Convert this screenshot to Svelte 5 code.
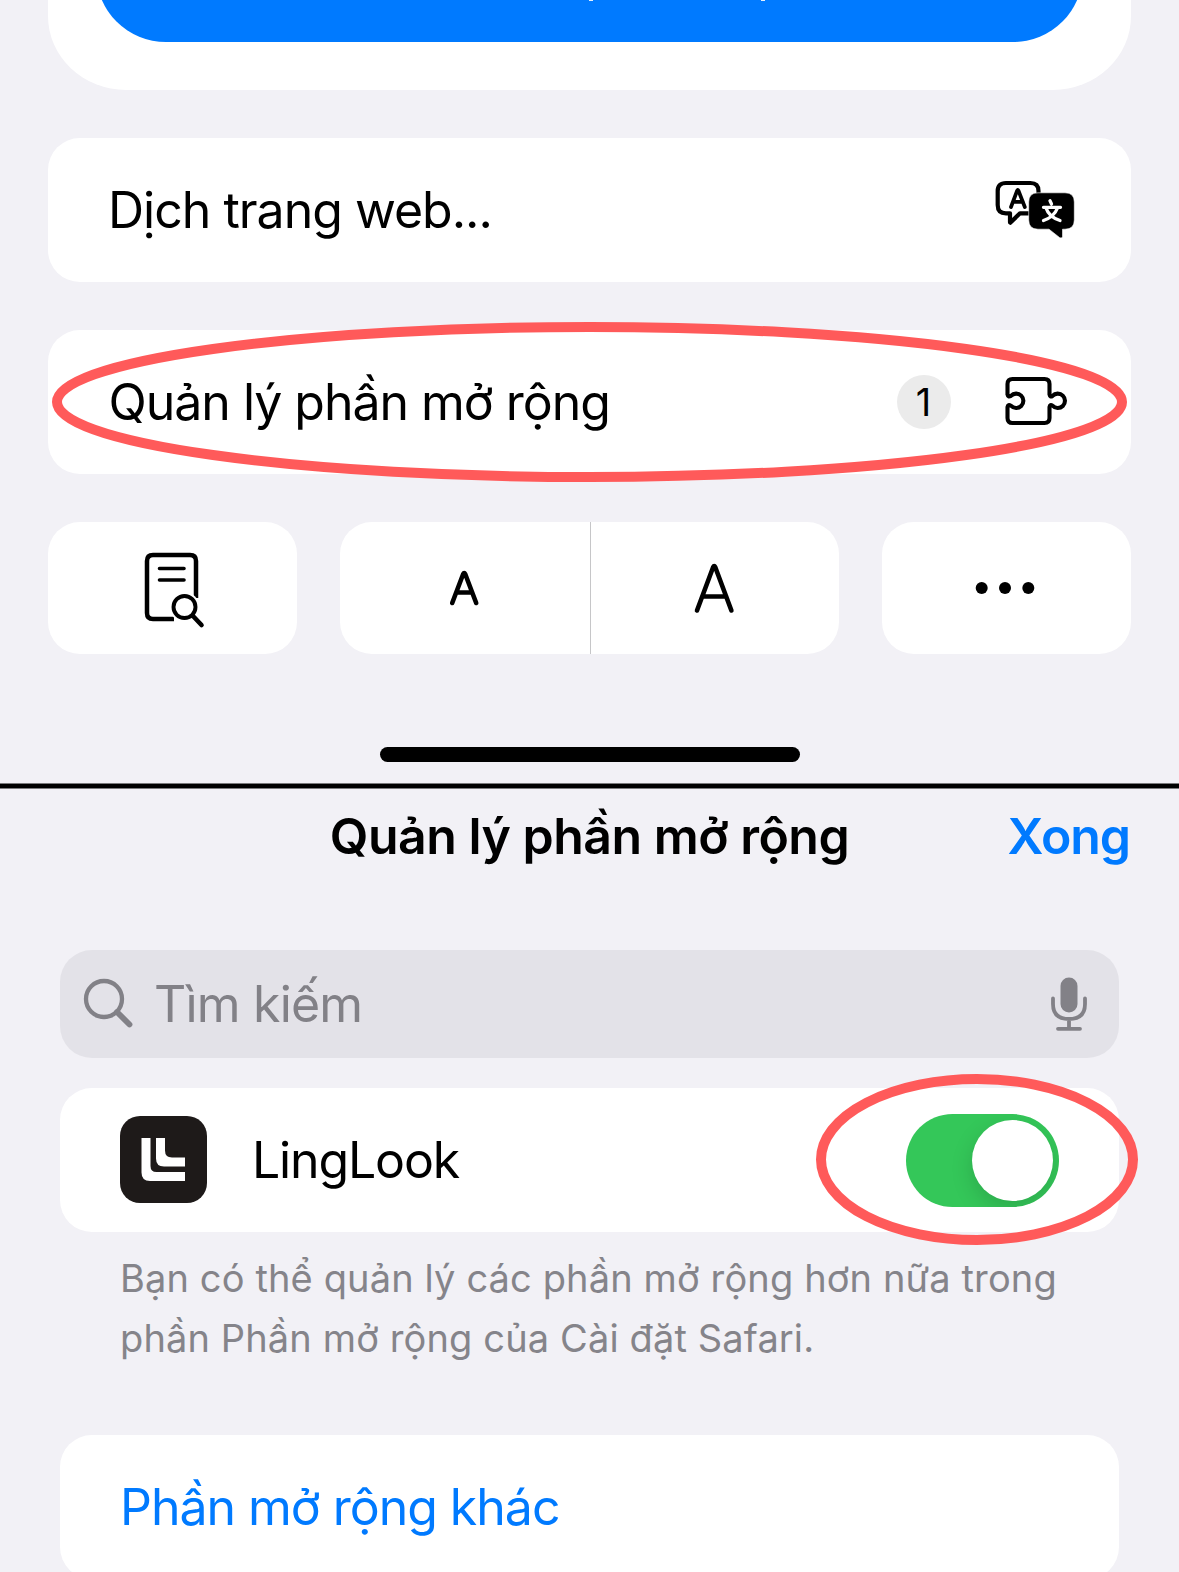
<script>
  const title = 'Quản lý phần mở rộng';
</script>

<main>
  <section class="sheet">
    <div class="hero"><div class="cta"><i></i><i></i></div></div>

    <div class="row">
      <span class="t t1">Dịch trang web...</span>
      <svg class="translate" width="80" height="60" viewBox="0 0 80 60">
        <path d="M11 3H35.500Q43.500 3 43.500 11V33.300H25L15.500 42.500Q15 43 15 42V33.300H11Q2.700 33.300 2.700 25V11Q2.700 3 11 3Z" fill="none" stroke="#000" stroke-width="4.200" stroke-linejoin="round" />
        <path d="M16 27L22.200 10.500Q22.800 9.300 23.400 10.500L29.800 27M18 21.800H28" fill="none" stroke="#000" stroke-width="3.700" stroke-linecap="round" stroke-linejoin="round" />
        <path d="M43 12.800H70Q79.300 12.800 79.300 22V40Q79.300 49.200 70 49.200H67.500V56.500Q67 59 64.500 57.500L54 49.200H43Q33.700 49.200 33.700 40V22Q33.700 12.800 43 12.800Z" stroke="#fff" stroke-width="0.600" />
        <path d="M55 20.800L56.500 24M48.500 27.300H65.500M51 28Q54 37 65 40.500M62.500 28Q59 37 48.500 40.500" fill="none" stroke="#fff" stroke-width="3.300" stroke-linecap="round" />
      </svg>
    </div>

    <div class="row manage">
      <span class="t t2">{title}</span>
      <b class="badge">1</b>
      <svg class="puzzle" width="64" height="52" viewBox="0 0 64 52">
        <path d="M3.500 19V8Q3.500 3 8.500 3H40.500Q45.500 3 45.500 8V18.500Q46 21.500 48.500 19.900A7.200 7.200 0 1 1 48.500 29.700Q46 28 45.500 31V42Q45.500 47 40.500 47H8.500Q3.500 47 3.500 42V31Q4 28 6.900 29.700A7.200 7.200 0 1 0 6.900 19.900Q4 21.500 3.500 18.500" fill="none" stroke="#000" stroke-width="4.100" stroke-linejoin="round" />
      </svg>
      <svg class="ring ring-wide" width="1075" height="160" viewBox="0 0 1075 160"><ellipse cx="537.500" cy="80" rx="532.500" ry="75" /></svg>
    </div>

    <div class="tools">
      <div class="tile">
        <svg class="find" width="62" height="76" viewBox="0 0 62 76">
          <path d="M31 69H10Q4 69 4 63V11Q4 5 10 5H47Q53 5 53 11V48" fill="none" stroke="#000" stroke-width="4.500" />
          <path d="M16.500 18.500H41M16.500 30H41" stroke="#000" stroke-width="3.600" stroke-linecap="round" />
          <circle cx="41.500" cy="57" r="15" fill="#fff" />
          <circle cx="41.500" cy="57" r="11" fill="#fff" stroke="#000" stroke-width="3.900" />
          <path d="M50 66L58.500 75" stroke="#000" stroke-width="4.600" stroke-linecap="round" />
        </svg>
      </div>
      <div class="tile pair">
        <div class="half">
          <svg width="30" height="36" viewBox="0 0 30 36"><path d="M2.200 33L13.200 4Q14.200 2 15.200 4L26.200 33M6.500 22.500H22" /></svg>
        </div>
        <div class="half">
          <svg width="42" height="52" viewBox="0 0 42 52"><path d="M3 48.500L19.200 5Q20.200 3 21.200 5L37.400 48.500M9 34.500H31.500" /></svg>
        </div>
      </div>
      <div class="tile">
        <svg class="dots" width="60" height="14" viewBox="0 0 60 14"><circle cx="6.700" cy="7" r="6" /><circle cx="30" cy="7" r="6" /><circle cx="53.300" cy="7" r="6" /></svg>
      </div>
    </div>

    <div class="home"></div>
  </section>

  <div class="divider"></div>

  <section class="panel">
    <header>
      <h1>{title}</h1>
      <a class="done">Xong</a>
    </header>

    <div class="search">
      <svg width="52" height="52" viewBox="0 0 52 52">
        <circle cx="21" cy="21" r="18" fill="none" stroke="#828187" stroke-width="4.300" />
        <path d="M34 34L46.500 46.500" stroke="#828187" stroke-width="5.800" stroke-linecap="round" />
      </svg>
      <span class="t t3">Tìm kiếm</span>
      <svg class="mic" width="36" height="54" viewBox="0 0 36 54" fill="none" stroke="#828187" stroke-width="3.800" stroke-linecap="round">
        <rect x="9.500" y="0.500" width="17" height="35" rx="8.500" fill="#828187" stroke="none" />
        <path d="M2 21.500V27Q2 42 18 42Q34 42 34 27V21.500M18 42V51M7 51.800H29" />
      </svg>
    </div>

    <div class="ext">
      <svg class="logo" width="87" height="87" viewBox="0 0 87 87">
        <rect width="87" height="87" rx="20" fill="#1e1a19" />
        <path d="M21.500 22H30.500V50Q30.500 56 36.500 56H65V65H30Q21.500 65 21.500 56.500Z" fill="#fff" />
        <path d="M36 22H45V34.500Q45 41.500 52 41.500H65V50.500H44Q36 50.500 36 42.500Z" fill="#fff" />
      </svg>
      <span class="t t4">LingLook</span>
      <div class="switch"><div class="knob"></div></div>
      <svg class="ring ring-switch" width="322" height="171" viewBox="0 0 322 171"><ellipse cx="161" cy="85.500" rx="156" ry="80.500" /></svg>
    </div>

    <p class="note">Bạn có thể quản lý các phần mở rộng hơn nữa trong<br />phần Phần mở rộng của Cài đặt Safari.</p>

    <div class="more"><span class="t t5">Phần mở rộng khác</span></div>
  </section>
</main>

<style>
  :global(body) { background: #f2f1f6; overflow: hidden; }
  main { width: 1179px; height: 1572px; overflow: hidden; background: #f2f1f6; color: #000; font-family: Inter, "Liberation Sans", sans-serif; }
  main * { box-sizing: border-box; }
  svg { display: block; flex: none; overflow: visible; }
  .sheet { height: 783px; padding: 0 48px; display: flex; flex-direction: column; }
  .hero { height: 90px; flex: none; background: #fff; border-radius: 0 0 78px 78px / 0 0 74px 74px; padding: 0 48px; overflow: hidden; }
  .cta { height: 150px; margin-top: -108px; background: #007aff; border-radius: 70px; display: flex; padding-top: 108px; }
  .cta i { width: 4px; height: 1px; background: #e5f1ff; margin-left: 493px; }
  .cta i + i { margin-left: 168px; }
  .row { position: relative; flex: none; height: 144px; margin-top: 48px; border-radius: 32px; background: #fff; display: flex; align-items: center; padding-left: 61px; }
  .t { font-size: 50px; line-height: 60px; white-space: nowrap; letter-spacing: -1.02px; }
  .t1 { letter-spacing: -1px; margin-left: -1px; }
  .t2 { margin-left: -0.5px; }
  .translate { margin: 0 56px 0 auto; }
  .badge { width: 54px; height: 54px; border-radius: 50%; background: #ebebeb; font-size: 38px; font-weight: 400; line-height: 55px; text-align: center; margin: 0 53px 0 auto; }
  .puzzle { margin-right: 63.500px; }
  .ring { position: absolute; fill: none; stroke: #ff5a5a; stroke-width: 10px; }
  .ring-wide { left: 4px; top: -8px; }
  .tools { flex: none; height: 132px; margin-top: 48px; display: grid; grid-template-columns: 249px 499px 249px; gap: 43px; }
  .tile { border-radius: 32px; background: #fff; display: flex; align-items: center; justify-content: center; }
  .find { margin-left: 3px; }
  .dots { margin-right: 4px; }
  .half { flex: 1; height: 132px; display: flex; align-items: center; justify-content: center; }
  .half:first-child { flex: 0 0 250px; }
  .half + .half { border-left: 1px solid #c6c6c8; padding-right: 1px; }
  .half path { fill: none; stroke: #000; stroke-width: 4.6; stroke-linecap: round; stroke-linejoin: round; }
  .home { width: 420px; height: 15px; margin: 93px auto 0; border-radius: 8px; background: #000; }
  .divider { height: 6px; background: #000; border: solid #7a7a7c; border-width: 1px 0; }
  .panel { padding: 0 60px; }
  header { height: 161px; display: grid; grid-template-columns: 1fr auto 1fr; margin: 0 -12px; padding-top: 17px; }
  h1 { grid-column: 2; margin: 0; font-size: 50px; font-weight: 600; line-height: 60px; white-space: nowrap; letter-spacing: -0.5px; }
  .done { justify-self: end; font-size: 50px; font-weight: 600; line-height: 60px; color: #007aff; letter-spacing: -1.1px; margin-right: 1px; }
  .search { height: 108px; border-radius: 32px; background: #e3e2e8; display: flex; align-items: center; padding: 0 32px 0 23px; }
  .t3 { color: #828187; margin-left: 19px; letter-spacing: -0.8px; }
  .mic { margin-left: auto; }
  .ext { position: relative; height: 144px; margin-top: 30px; border-radius: 32px; background: #fff; display: flex; align-items: center; padding: 0 60px; }
  .logo { margin-top: -1px; }
  .t4 { margin-left: 45px; letter-spacing: -1.15px; }
  .switch { width: 153px; height: 93px; margin-left: auto; border-radius: 47px; background: #34c759; padding: 6px; overflow: hidden; }
  .knob { width: 81px; height: 81px; margin-left: auto; border-radius: 50%; background: #fff; box-shadow: 0 8px 22px rgb(0 0 0 / 0.15); }
  .ring-switch { left: 756px; top: -14px; }
  .note { margin: 16px 0 0; padding-left: 60px; height: 120px; font-size: 38px; line-height: 60px; color: #85848a; white-space: nowrap; letter-spacing: 0.13px; }
  .more { margin-top: 67px; height: 144px; border-radius: 32px; background: #fff; padding: 42px 60px; color: #007aff; }
</style>
